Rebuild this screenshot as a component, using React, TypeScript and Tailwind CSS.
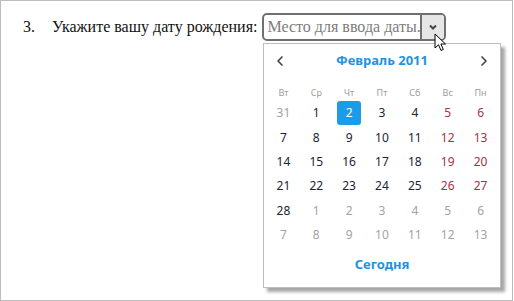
import { ChevronLeft, ChevronRight } from "lucide-react";

type Day = { n: number; tone: "muted" | "normal" | "weekend" | "sel" };

const weekdays = ["Вт", "Ср", "Чт", "Пт", "Сб", "Вс", "Пн"];

// Feb 2011, week starting Tuesday
const days: Day[] = [
  31, 1, 2, 3, 4, 5, 6, 7, 8, 9, 10, 11, 12, 13, 14, 15, 16, 17, 18, 19, 20, 21, 22, 23, 24, 25,
  26, 27, 28, 1, 2, 3, 4, 5, 6, 7, 8, 9, 10, 11, 12, 13,
].map((n, i) => {
  const col = i % 7;
  if (i === 0 || i > 28) return { n, tone: "muted" };
  if (n === 2) return { n, tone: "sel" };
  if (col >= 5) return { n, tone: "weekend" };
  return { n, tone: "normal" };
});

const toneClass = {
  muted: "text-[#a3a3a3]",
  normal: "text-[#1c2333]",
  weekend: "text-[#a83244]",
  sel: "bg-[#1b9be8] text-white rounded-[3px]",
};

function Cursor() {
  return (
    <svg
      className="absolute left-[433px] top-[32px]"
      width="14"
      height="20"
      viewBox="0 0 14 20"
    >
      <path
        d="M1 1 L1 15 L4.5 11.8 L7 17.5 L9.3 16.5 L6.9 11 L11.5 11 Z"
        fill="white"
        stroke="black"
        strokeWidth="1"
        strokeLinejoin="round"
      />
    </svg>
  );
}

export default function App() {
  return (
    <div className="relative w-[513px] h-[301px] bg-white border border-[#bdbdbd] overflow-hidden">
      <div className="flex items-start pt-[11px] font-['Liberation_Serif',serif] text-[16px] text-[#111]">
        <span className="ml-[22px] w-[29px] leading-[28px] mt-[1px]">3.</span>
        <span className="leading-[28px] mt-[1px]">Укажите вашу дату рождения:</span>
        <div className="ml-[5px] mt-[1px] flex h-[28px] w-[184px] rounded-[5px] border-2 border-[#707070] overflow-hidden">
          <div className="flex-1 pl-[3px] leading-[24px] text-[16px] text-[#7c7c7c] whitespace-nowrap overflow-hidden">
            Место для ввода даты.
          </div>
          <div className="w-[24px] flex items-center justify-center bg-[#e6e6e6] border-l-2 border-[#707070]">
            <svg width="8" height="6" viewBox="0 0 8 6">
              <path d="M1 1.5 L4 4.5 L7 1.5" fill="none" stroke="#444" strokeWidth="2" />
            </svg>
          </div>
        </div>
      </div>

      {/* Calendar dropdown */}
      <div className="absolute left-[262px] top-[42px] w-[238px] h-[245px] bg-white border border-[#bdbdbd] shadow-[4px_4px_3px_rgba(0,0,0,0.35)] font-['Noto_Sans',sans-serif]">
        <div className="flex h-[34px] items-center justify-between px-[8px]">
          <ChevronLeft size={16} strokeWidth={2.5} className="text-[#3d4550]" />
          <span className="text-[13px] font-bold text-[#1f93e0]">Февраль 2011</span>
          <ChevronRight size={16} strokeWidth={2.5} className="text-[#3d4550]" />
        </div>
        <div className="grid grid-cols-7 px-[3px] h-[23px] pt-[9px] text-[9px] leading-[12px] text-[#a39a9a]">
          {weekdays.map((w) => (
            <span key={w} className="text-center">
              {w}
            </span>
          ))}
        </div>
        <div className="grid grid-cols-7 px-[3px] text-[12px]">
          {days.map((d, i) => (
            <div key={i} className="flex h-[24.4px] items-center justify-center">
              <span
                className={`flex h-[24px] w-[24px] items-center justify-center ${toneClass[d.tone]}`}
              >
                {d.n}
              </span>
            </div>
          ))}
        </div>
        <div className="flex h-[35px] items-center justify-center text-[13px] font-bold text-[#1f93e0]">
          Сегодня
        </div>
      </div>

      <Cursor />
    </div>
  );
}
